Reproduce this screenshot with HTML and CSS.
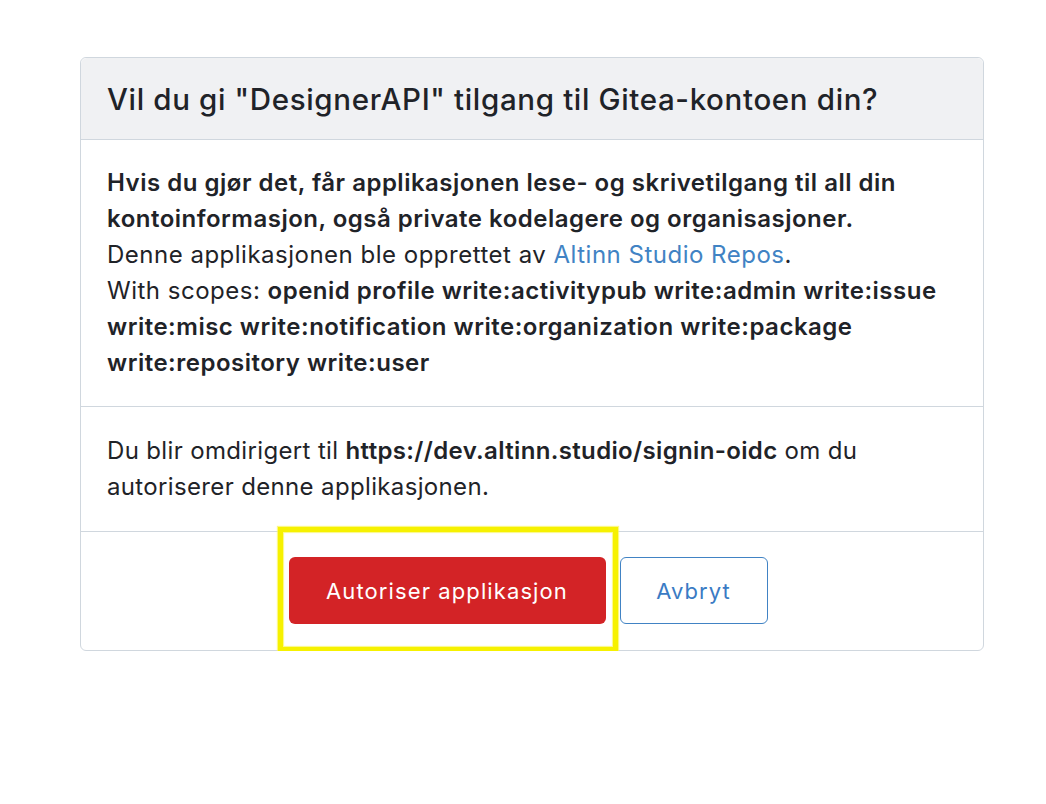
FILE: index.html
```html
<!DOCTYPE html>
<html lang="no">
<head>
<meta charset="utf-8">
<title>Autoriser applikasjon</title>
<link rel="stylesheet" href="styles.css">
</head>
<body>
<div class="page">
  <div class="card">
    <div class="card-header">Vil du gi "DesignerAPI" tilgang til Gitea-kontoen din?</div>
    <div class="card-section">
      <p class="text"><b>Hvis du gjør det, får applikasjonen lese- og skrivetilgang til all din kontoinformasjon, også private kodelagere og organisasjoner.</b><br>
      Denne applikasjonen ble opprettet av <a class="link" href="#">Altinn Studio Repos</a>.<br>
      With scopes: <b>openid profile write:activitypub write:admin write:issue write:misc write:notification write:organization write:package write:repository write:user</b></p>
    </div>
    <div class="card-section">
      <p class="text text-tight">Du blir omdirigert til <b>https://dev.altinn.studio/signin-oidc</b> om du autoriserer denne applikasjonen.</p>
    </div>
    <div class="card-actions">
      <span class="highlight">
        <button class="btn btn-red">Autoriser applikasjon</button>
      </span>
      <button class="btn btn-basic">Avbryt</button>
    </div>
  </div>
</div>
</body>
</html>
```

FILE: styles.css
```css
* { box-sizing: border-box; }
html, body { margin: 0; padding: 0; background: #fff; }
body {
  font-family: Inter, "Noto Sans", "Liberation Sans", sans-serif;
  color: #1f2328;
}
.page {
  padding: 57px 62px 0 80px;
}
.card {
  width: 904px;
  border: 1px solid #d0d7de;
  border-radius: 6px;
}
.card-header {
  background: #f0f1f3;
  border-bottom: 1px solid #d0d7de;
  border-radius: 6px 6px 0 0;
  height: 82px;
  padding: 0 26px;
  display: flex;
  align-items: center;
  font-size: 29.5px;
  font-weight: 500;
  letter-spacing: 0.65px;
}
.card-section {
  border-bottom: 1px solid #d0d7de;
  padding: 25px 26px 25px;
}
.card-section + .card-section {
  padding: 26px 26px 26px;
}
.text {
  margin: 0;
  font-size: 24px;
  line-height: 36px;
  letter-spacing: 0.5px;
}
.text-tight {
  letter-spacing: 0.35px;
}
.text b { font-weight: 600; }
.link { color: #4183c4; text-decoration: none; }
.card-actions {
  display: flex;
  justify-content: center;
  align-items: center;
  gap: 14px;
  padding: 25px 8px 26px 0;
}
.highlight {
  position: relative;
  display: inline-flex;
}
.highlight::after {
  content: "";
  position: absolute;
  left: -11px; right: -12px; top: -30px; bottom: -28px;
  border: 5px solid #f6f100;
  box-shadow: 0 0 1px 1px rgba(250, 245, 80, 0.7), inset 0 0 1px 1px rgba(250, 245, 80, 0.7);
  pointer-events: none;
}
.btn {
  font-family: inherit;
  font-size: 22px;
  letter-spacing: 1.1px;
  height: 67px;
  border-radius: 6px;
  cursor: pointer;
}
.btn-red {
  width: 317px;
  background: #d32326;
  color: #fff;
  border: none;
}
.btn-basic {
  width: 148px;
  background: #fff;
  color: #3a7bc4;
  border: 1px solid #4183c4;
}
```
